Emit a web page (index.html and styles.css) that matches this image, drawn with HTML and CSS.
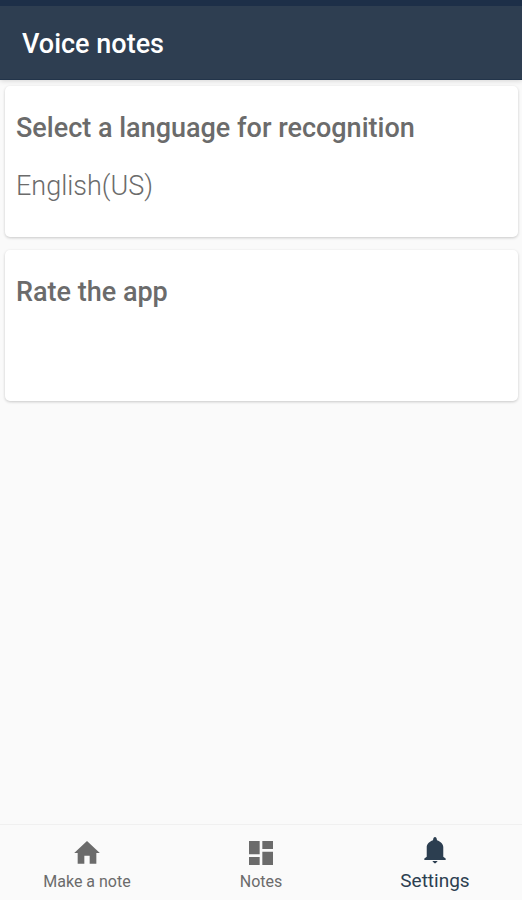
FILE: index.html
```html
<!DOCTYPE html>
<html lang="en">
<head>
<meta charset="utf-8">
<meta name="viewport" content="width=device-width, initial-scale=1">
<title>Voice notes</title>
<link rel="stylesheet" href="styles.css">
</head>
<body>
<header class="app-bar">
  <h1 class="app-title">Voice notes</h1>
</header>
<main class="settings">
  <button class="card" type="button">
    <span class="card-title">Select a language for recognition</span>
    <span class="card-value">English(US)</span>
  </button>
  <button class="card" type="button">
    <span class="card-title">Rate the app</span>
  </button>
</main>
<nav class="tabs">
  <a class="tab" href="#make">
    <svg class="tab-icon" viewBox="0 0 24 24" aria-hidden="true"><path d="M10 20v-6h4v6h5v-8h2.600L12 3 2.400 12H5v8z"/></svg>
    <span class="tab-label">Make a note</span>
  </a>
  <a class="tab" href="#notes">
    <svg class="tab-icon" viewBox="0 0 24 24" aria-hidden="true"><path d="M3 13h8V3H3v10zm0 8h8v-6H3v6zm10 0h8V11h-8v10zm0-18v6h8V3h-8z"/></svg>
    <span class="tab-label">Notes</span>
  </a>
  <a class="tab tab-active" href="#settings" aria-current="page">
    <svg class="tab-icon" viewBox="0 0 24 24" aria-hidden="true"><path d="M10 20.300h4L12.500 22h-1L10 20.300zM18.200 17V9.800c0-2.400-1.900-4.200-4.700-5.200-.2-1.400-.7-2.300-1.500-2.300s-1.300.9-1.500 2.300c-2.800 1-4.700 2.800-4.700 5.200V17L4 18.300v1.200h16v-1.200L18.200 17z"/></svg>
    <span class="tab-label">Settings</span>
  </a>
</nav>
</body>
</html>
```
FILE: styles.css
```css
* {
  box-sizing: border-box;
}

body {
  display: flex;
  flex-direction: column;
  min-height: 100vh;
  margin: 0;
  background: #fafafa;
  color: #6b6b6b;
  font-family: Roboto, "Liberation Sans", sans-serif;
}

.app-bar {
  padding: 22px 22px 18px;
  border-top: 6px solid #1d2f48;
  border-bottom: 1px solid #22344a;
  background: #2e3e51;
  box-shadow: 0 1px 5px rgba(0, 0, 0, 0.15);
}

.app-title {
  margin: 0;
  color: #fff;
  font-size: 27px;
  font-weight: 500;
  line-height: 33px;
}

.settings {
  display: flex;
  flex: 1;
  flex-direction: column;
  gap: 13px;
  padding: 6px 4px 6px 5px;
}

.card {
  display: flex;
  flex-direction: column;
  gap: 26px;
  min-height: 151px;
  padding: 26px 11px;
  border: 0;
  border-radius: 5px;
  background: #fff;
  box-shadow: 0 1px 3px rgba(0, 0, 0, 0.2);
  color: inherit;
  font: inherit;
  font-size: 27px;
  line-height: 32px;
  text-align: left;
}

.card-title {
  font-weight: 500;
}

.card-value {
  font-weight: 300;
}

.tabs {
  display: flex;
  height: 76px;
  border-top: 1px solid #f0f0f0;
}

.tab {
  display: flex;
  flex: 1;
  flex-direction: column;
  align-items: center;
  padding-top: 12px;
  color: #6b6b6b;
  font-size: 16px;
  line-height: 26px;
  text-decoration: none;
}

.tab-icon {
  width: 32px;
  height: 32px;
  fill: currentColor;
}

.tab-active {
  padding-top: 9px;
  color: #2c3e50;
  font-size: 19px;
}

.tab-active .tab-label {
  padding-top: 2px;
}
```
